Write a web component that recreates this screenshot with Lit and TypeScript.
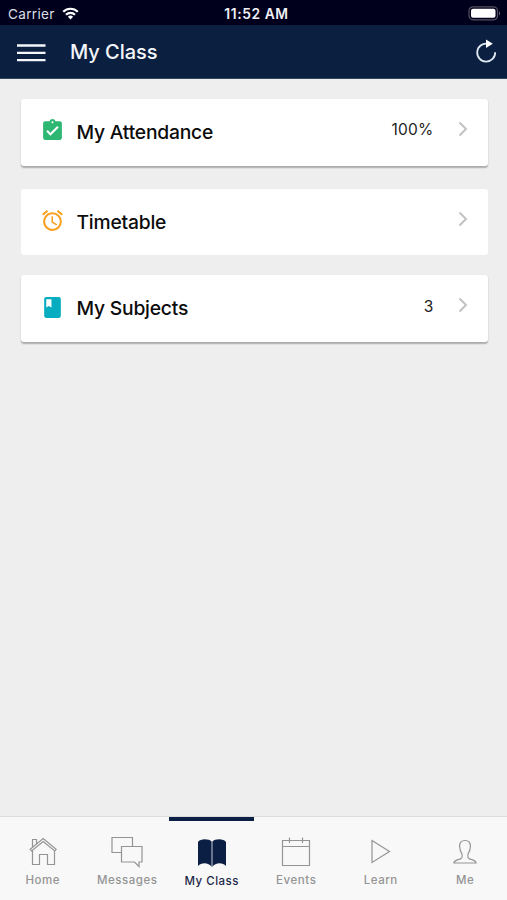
import { LitElement, html, css, svg, nothing } from "lit";
import { customElement, property } from "lit/decorators.js";
import { classMap } from "lit/directives/class-map.js";

const cardIcons = {
  attendance: svg`<path fill="#2eb673" d="M19 3h-4.180C14.400 1.840 13.300 1 12 1c-1.300 0-2.400.84-2.820 2H5c-1.100 0-2 .9-2 2v14c0 1.100.9 2 2 2h14c1.100 0 2-.9 2-2V5c0-1.100-.9-2-2-2zm-7 0c.55 0 1 .45 1 1s-.45 1-1 1-1-.45-1-1 .45-1 1-1zm-2 14l-4-4 1.410-1.410L10 14.170l6.590-6.590L18 9l-8 8z"/>`,
  timetable: svg`<path fill="#f9a01f" d="M22 5.720l-4.600-3.860-1.290 1.530 4.600 3.860L22 5.720zM7.880 3.390L6.600 1.860 2 5.710l1.290 1.530 4.590-3.850zM12.500 8H11v6l4.750 2.850.75-1.230-4-2.370V8zM12 4c-4.970 0-9 4.030-9 9s4.020 9 9 9a9 9 0 0 0 0-18zm0 16c-3.870 0-7-3.130-7-7s3.130-7 7-7 7 3.130 7 7-3.130 7-7 7z"/>`,
  subjects: svg`<path fill="#06adc1" fill-rule="evenodd" d="M18 2H6c-1.100 0-2 .9-2 2v16c0 1.100.9 2 2 2h12c1.100 0 2-.9 2-2V4c0-1.100-.9-2-2-2zM6 4h5v8l-2.500-1.500L6 12V4z"/>`,
};

const tabIcons = {
  home: svg`<path d="M2.200 13.300 15.200 2.500 28.200 13.300L26.800 15 15.200 5.500 3.600 15zM4.500 11.300V3.500h4v4.500M4.500 14.500v14H11.500V18.500h8V28.500H26.500V14.500"/>`,
  messages: svg`<path d="M9 16.500H0V1.500H20.500V10.500M9.500 10.500H30V26H27v4.500L22.500 26H9.500z"/>`,
  class: svg`<path class="solid" d="M1 29V5C3 1.300 12 1.300 14.600 4.500V30C12 25.500 4.500 25 1 29zM29 29V5C27 1.300 18 1.300 15.400 4.500V30C18 25.500 25.500 25 29 29z"/>`,
  events: svg`<path d="M1.500 4.500H28.500V29.500H1.500zM1.500 10.500H28.500M8.500 1.500V7M21.500 1.500V7"/>`,
  learn: svg`<path d="M6 4.500 23.500 15.500 6 26.500z"/>`,
  me: svg`<path d="M15 4.500c-3.900 0-5.600 2.200-5.400 6 .1 3 .8 5.300 2.400 7.500.7 3.500-.2 4.300-2.200 5.100-2.700 1-5.400.9-5.900 3.900h22.200c-.5-3-3.200-2.900-5.900-3.900-2-.8-2.900-1.600-2.200-5.100 1.600-2.200 2.300-4.500 2.400-7.500.2-3.800-1.500-6-5.400-6z"/>`,
};

@customElement("class-card")
class ClassCard extends LitElement {
  @property() icon: keyof typeof cardIcons = "attendance";
  @property() label = "";
  @property() value = "";

  static styles = css`
    :host {
      display: flex;
      align-items: center;
      box-sizing: border-box;
      height: 67px;
      padding: 0 20px 0 19px;
      border-radius: 3px;
      background: #fff;
      color: #0c0c0c;
    }
    .icon { width: 25px; height: 25px; margin: -3px 12px 0 0; flex: none; }
    .label { flex: 1; font-size: 19.300px; font-weight: 500; letter-spacing: -.22px; margin-top: -1px; }
    .value { font-size: 15.500px; margin: -5px 24px 0 0; color: #222; letter-spacing: .2px; }
    .chevron { width: 10px; height: 16px; margin-top: -7px; flex: none; }
  `;

  render() {
    return html`
      <svg class="icon" viewBox="0 0 24 24">${cardIcons[this.icon]}</svg>
      <span class="label">${this.label}</span>
      ${this.value ? html`<span class="value">${this.value}</span>` : nothing}
      <svg class="chevron" viewBox="0 0 10 16"><path d="M1.500 1.500 8 8 1.500 14.500" fill="none" stroke="#c2c2c4" stroke-width="2"/></svg>
    `;
  }
}

@customElement("app-root")
class AppRoot extends LitElement {
  static styles = css`
    :host {
      display: flex;
      flex-direction: column;
      height: 900px;
      overflow: hidden;
      background: #eee;
      font-family: Inter, "Liberation Sans", sans-serif;
    }
    .status {
      display: grid;
      grid-template-columns: 1fr auto 1fr;
      align-items: center;
      height: 25px;
      padding: 2px 6px 0 8px;
      box-sizing: border-box;
      background: #00001d;
      color: #fff;
      font-size: 13.600px;
      flex: none;
    }
    .carrier { display: flex; align-items: center; gap: 7px; color: #dedee6; letter-spacing: .3px; }
    .time { font-weight: 600; font-size: 13.800px; letter-spacing: .6px; color: #f0f0f5; margin-left: 4px; }
    .battery { justify-self: end; }
    .header {
      display: flex;
      align-items: center;
      height: 54px;
      box-sizing: border-box;
      padding: 0 10px 0 16px;
      background: #0b1f40;
      border-bottom: 1px solid #31465e;
      color: #fff;
      flex: none;
    }
    .menu { margin-top: 2px; }
    .refresh { margin-top: -2px; }
    .title { flex: 1; margin: 0 0 0 23px; font-size: 20px; font-weight: 550; letter-spacing: -.05px; color: #f4f6fa; }
    .main { flex: 1; padding: 19.500px 19.500px 0 20.500px; }
    .raised { box-shadow: 0 1.500px 1.500px rgba(0, 0, 0, .28); }
    .second { margin: 23.500px 0 20px; height: 66px; }
    .tabs {
      display: grid;
      grid-template-columns: repeat(6, 1fr);
      height: 84px;
      box-sizing: border-box;
      background: #f8f8f8;
      border-top: 1px solid #dcdcdc;
      flex: none;
    }
    .tab {
      display: flex;
      flex-direction: column;
      align-items: center;
      padding: 19px 0 0 1px;
      box-sizing: border-box;
      color: #949494;
      font-size: 11.500px;
      font-weight: 500;
      letter-spacing: .55px;
      line-height: 16px;
    }
    .tab svg { width: 32px; height: 32px; margin-bottom: 4px; fill: none; stroke: #949494; stroke-width: 1.200; flex: none; overflow: visible; }
    .tab .solid { fill: #0b1f45; stroke: none; }
    .active { color: #1d2948; border-top: 4px solid #0b1f45; padding-top: 16px; letter-spacing: .5px; }
  `;

  private tab(icon: keyof typeof tabIcons, label: string, active = false) {
    return html`<div class=${classMap({ tab: true, active })}>
      <svg viewBox="-1 0 32 32">${tabIcons[icon]}</svg>
      <span>${label}</span>
    </div>`;
  }

  render() {
    return html`
      <div class="status">
        <div class="carrier">
          <span>Carrier</span>
          <svg width="17" height="13" viewBox="0 0 17 13" fill="none" stroke="#fff" stroke-width="2.200">
            <path d="M1.200 4.800a10.300 10.300 0 0 1 14.600 0M4 7.700a6.400 6.400 0 0 1 9 0"/>
            <path fill="#fff" stroke="none" d="M8.500 12.500 5.900 9.800a3.700 3.700 0 0 1 5.200 0z"/>
          </svg>
        </div>
        <span class="time">11:52 AM</span>
        <svg class="battery" width="33" height="15" viewBox="0 0 33 15">
          <rect x="1" y=".8" width="28.500" height="13" rx="4" fill="none" stroke="#55505f" stroke-width="1.200"/>
          <rect x="3" y="2.800" width="24.500" height="9" rx="2" fill="#fff"/>
          <path d="M31 5q2 2.300 0 4.500z" fill="#6a6675"/>
        </svg>
      </div>
      <header class="header">
        <svg class="menu" width="31" height="20" viewBox="0 0 31 20"><path d="M1 2.500H29.500M1 9.800H29.500M1 17.200H29.500" stroke="#f4f6fa" stroke-width="2.300"/></svg>
        <h1 class="title">My Class</h1>
        <svg class="refresh" width="22" height="26" viewBox="0 0 22 26"><path d="M12.500 5.700A9 9 0 1 0 20.200 14.300" fill="none" stroke="#dfe9f1" stroke-width="1.800"/><path d="M11 1.500 17.800 5.800 11 10z" fill="#fff"/></svg>
      </header>
      <main class="main">
        <class-card class="raised" icon="attendance" label="My Attendance" value="100%"></class-card>
        <class-card class="second" icon="timetable" label="Timetable"></class-card>
        <class-card class="raised" icon="subjects" label="My Subjects" value="3"></class-card>
      </main>
      <nav class="tabs">
        ${this.tab("home", "Home")}
        ${this.tab("messages", "Messages")}
        ${this.tab("class", "My Class", true)}
        ${this.tab("events", "Events")}
        ${this.tab("learn", "Learn")}
        ${this.tab("me", "Me")}
      </nav>
    `;
  }
}
